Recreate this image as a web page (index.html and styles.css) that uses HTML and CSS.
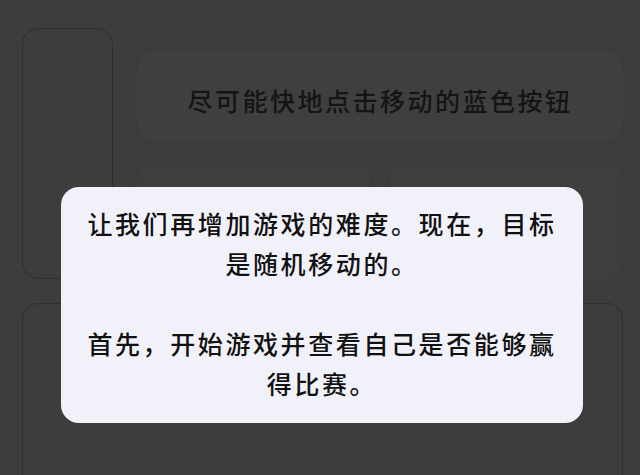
FILE: index.html
```html
<!DOCTYPE html>
<html lang="zh-CN">
<head>
<meta charset="utf-8">
<link rel="stylesheet" href="styles.css">
</head>
<body>
<div class="page">
  <div class="top">
    <div class="side-card"></div>
    <div class="main-col">
      <div class="prompt-card">尽可能快地点击移动的蓝色按钮</div>
      <div class="mid-row">
        <div class="mid-card"></div>
        <div class="mid-card"></div>
      </div>
    </div>
  </div>
  <div class="bottom-card"></div>
</div>
<div class="modal">
  <p>让我们再增加游戏的难度。现在，目标是随机移动的。</p>
  <p>首先，开始游戏并查看自己是否能够赢得比赛。</p>
</div>
</body>
</html>
```
FILE: styles.css
```css
html, body {
  margin: 0;
  padding: 0;
  height: 100%;
  overflow: hidden;
}
body {
  background: #3d3d3d;
  font-family: "Noto Sans CJK SC", "Noto Sans", sans-serif;
}
.page {
  height: 100%;
  box-sizing: border-box;
  padding: 28px 17px 0 22px;
  display: flex;
  flex-direction: column;
  gap: 22px;
}
.top {
  display: flex;
  gap: 24px;
  flex: none;
}
.side-card {
  width: 89px;
  height: 249px;
  border: 1px solid #2f2f2f;
  border-radius: 16px;
  flex: none;
}
.main-col {
  flex: 1;
  padding-top: 22px;
  display: flex;
  flex-direction: column;
  gap: 18px;
}
.prompt-card {
  height: 93px;
  border-radius: 20px;
  background: #3f3f3f;
  box-shadow: 0 1px 5px rgba(0,0,0,0.08);
  display: flex;
  align-items: center;
  justify-content: center;
  padding-top: 6px;
  box-sizing: border-box;
  color: #141414;
  font-size: 25px;
  font-weight: 500;
  letter-spacing: 2.5px;
}
.mid-row {
  display: grid;
  grid-template-columns: 1fr 1fr;
  gap: 18px;
}
.mid-card {
  height: 120px;
  border-radius: 20px;
  background: #3e3e3e;
  box-shadow: 0 1px 5px rgba(0,0,0,0.05);
}
.bottom-card {
  flex: 1;
  border: 1px solid #2f2f2f;
  border-bottom: none;
  border-radius: 16px 16px 0 0;
}
.modal {
  position: absolute;
  left: 61px;
  top: 187px;
  width: 522px;
  height: 236px;
  box-sizing: border-box;
  padding: 16px 22px 0;
  background: #f1f1f9;
  border-radius: 18px;
  color: #111;
  text-align: center;
  font-size: 25px;
  font-weight: 500;
  line-height: 40px;
  letter-spacing: 2.6px;
}
.modal p {
  margin: 0 0 40px;
}
```
